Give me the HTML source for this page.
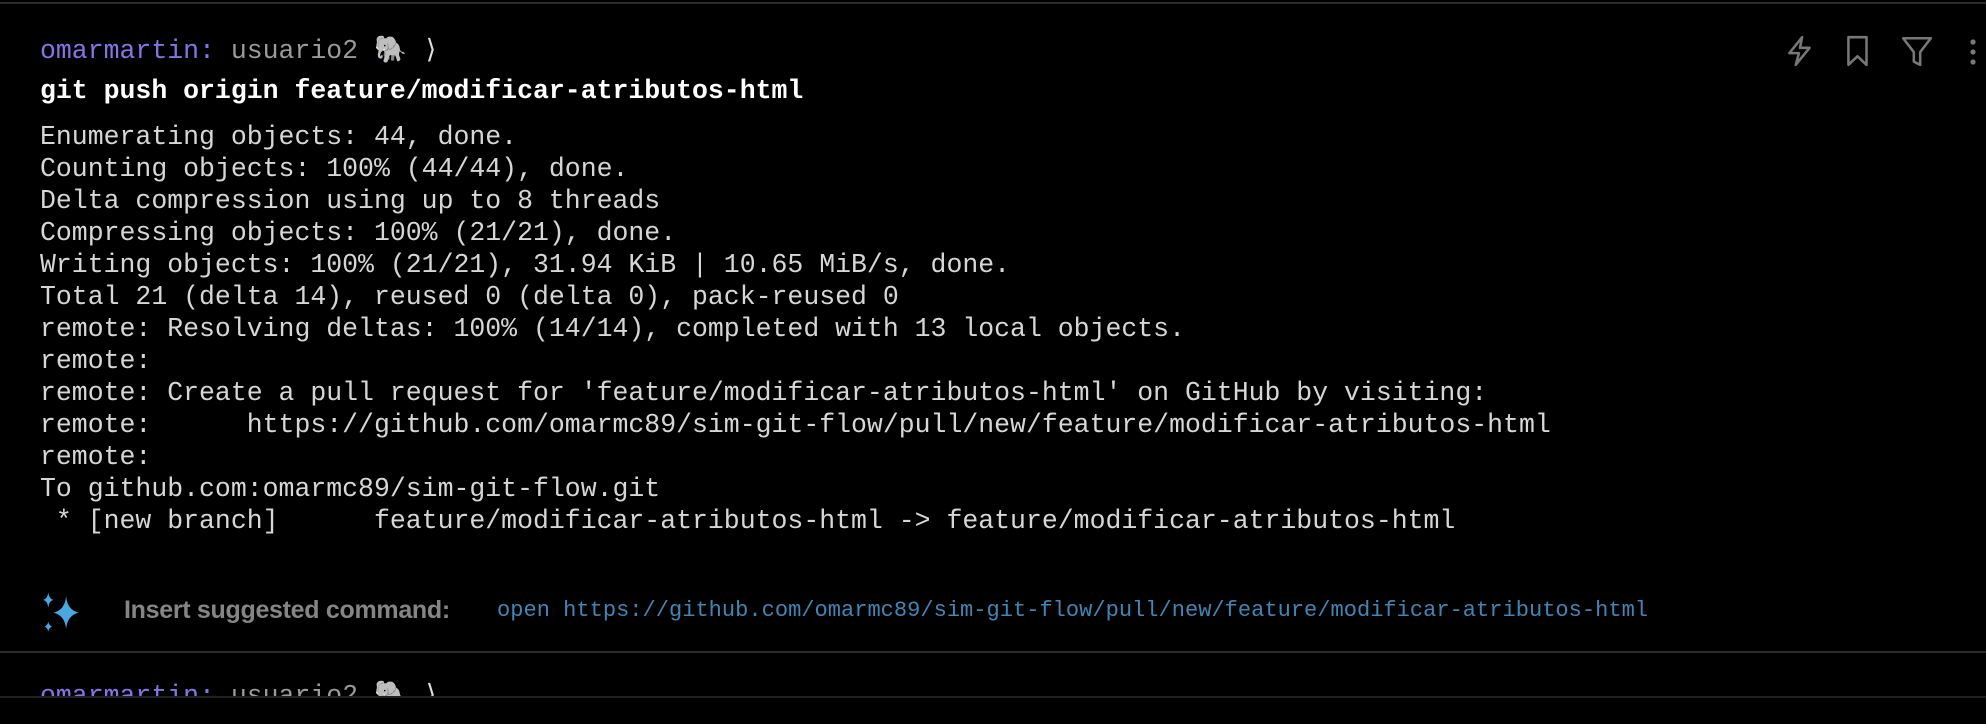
<!DOCTYPE html>
<html><head><meta charset="utf-8"><style>
body{margin:0;width:1986px;height:724px;background:#000;overflow:hidden;position:relative;font-family:"Liberation Mono",monospace;}
.t{position:absolute;left:40px;white-space:pre;font-size:26.5px;line-height:32px;}
.out{color:#d6d6d6;}
.hl{position:absolute;left:0;width:1986px;height:2px;background:#2b2b2b;}
.ic{position:absolute;top:34px;}
</style></head><body>
<div class="hl" style="top:2px"></div>
<div class="t" style="top:35px"><span style="color:#8a72e6">omarmartin:</span><span style="color:#9a9a9a"> usuario2 🐘 </span><span style="color:#ddd">⟩</span></div>
<div class="t" style="top:75px;color:#fff;font-weight:bold">git push origin feature/modificar-atributos-html</div>
<div class="t out" style="top:121px">Enumerating objects: 44, done.
Counting objects: 100% (44/44), done.
Delta compression using up to 8 threads
Compressing objects: 100% (21/21), done.
Writing objects: 100% (21/21), 31.94 KiB | 10.65 MiB/s, done.
Total 21 (delta 14), reused 0 (delta 0), pack-reused 0
remote: Resolving deltas: 100% (14/14), completed with 13 local objects.
remote:
remote: Create a pull request for 'feature/modificar-atributos-html' on GitHub by visiting:
remote:      https://github.com/omarmc89/sim-git-flow/pull/new/feature/modificar-atributos-html
remote:
To github.com:omarmc89/sim-git-flow.git
 * [new branch]      feature/modificar-atributos-html -> feature/modificar-atributos-html</div>
<svg class="ic" style="left:1784px" width="32" height="34" viewBox="0 0 30 32"><path d="M17 3 L5 18 H14 L11 29 L24 13 H15 Z" fill="none" stroke="#777" stroke-width="2.4" stroke-linejoin="round"/></svg>
<svg class="ic" style="left:1844px" width="28" height="34" viewBox="0 0 26 32"><path d="M4 3 H21 V29 L12.5 21 L4 29 Z" fill="none" stroke="#777" stroke-width="2.4" stroke-linejoin="round"/></svg>
<svg class="ic" style="left:1900px" width="34" height="34" viewBox="0 0 32 32"><path d="M3 4 H29 L19 17 V29 L13 26 V17 Z" fill="none" stroke="#777" stroke-width="2.4" stroke-linejoin="round"/></svg>
<svg class="ic" style="left:1967px" width="14" height="34" viewBox="0 0 14 32"><circle cx="6" cy="7" r="2.6" fill="#777"/><circle cx="6" cy="17" r="2.6" fill="#777"/><circle cx="6" cy="27" r="2.6" fill="#777"/></svg>
<svg style="position:absolute;left:38px;top:591px" width="46" height="42" viewBox="1 0 30 33"><path d="M20 4 Q21 15 30 17 Q21 19 20 30 Q19 19 10 17 Q19 15 20 4Z" fill="#4aa8e0"/><path d="M6 1 Q6.5 6 10 7 Q6.5 8 6 13 Q5.5 8 2 7 Q5.5 6 6 1Z" fill="#4aa8e0"/><path d="M6 24 Q6.4 27 9 28 Q6.4 29 6 32 Q5.6 29 3 28 Q5.6 27 6 24Z" fill="#4aa8e0"/></svg>
<div style="position:absolute;left:124px;top:596px;font-family:'Liberation Sans',sans-serif;font-weight:bold;font-size:25px;color:#858585;letter-spacing:-0.3px">Insert suggested command:</div>
<div style="position:absolute;left:497px;top:598px;font-size:22.05px;color:#3f86b4;white-space:pre">open https://github.com/omarmc89/sim-git-flow/pull/new/feature/modificar-atributos-html</div>
<div class="hl" style="top:651px"></div>
<div style="position:absolute;left:0;top:653px;width:1986px;height:43px;overflow:hidden">
<div class="t" style="top:27px"><span style="color:#8a72e6">omarmartin:</span><span style="color:#9a9a9a"> usuario2 🐘 </span><span style="color:#ddd">⟩</span></div>
</div>
<div class="hl" style="top:696px;background:#222"></div>
</body></html>
